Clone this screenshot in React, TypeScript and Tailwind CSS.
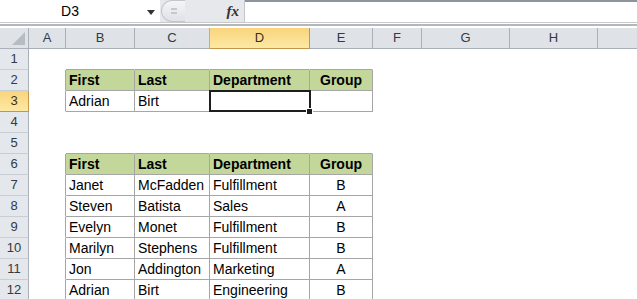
const COLS = [
    {key: "A", w: 37},
    {key: "B", w: 69},
    {key: "C", w: 75},
    {key: "D", w: 100},
    {key: "E", w: 63},
    {key: "F", w: 49},
    {key: "G", w: 88},
    {key: "H", w: 88},
    {key: "I", w: 88},
];

const HEADER = ["First", "Last", "Department", "Group"];

const DATA: Record<number, string[]> = {
    2: HEADER,
    3: ["Adrian", "Birt", "", ""],
    6: HEADER,
    7: ["Janet", "McFadden", "Fulfillment", "B"],
    8: ["Steven", "Batista", "Sales", "A"],
    9: ["Evelyn", "Monet", "Fulfillment", "B"],
    10: ["Marilyn", "Stephens", "Fulfillment", "B"],
    11: ["Jon", "Addington", "Marketing", "A"],
    12: ["Adrian", "Birt", "Engineering", "B"],
};

const ROWS = [1, 2, 3, 4, 5, 6, 7, 8, 9, 10, 11, 12];
const TABLE_COLS = ["B", "C", "D", "E"];

const inTable = (r: number, c?: string) =>
    !!c && TABLE_COLS.includes(c) && ((r >= 2 && r <= 3) || (r >= 6 && r <= 12));

const isHeaderRow = (r: number) => r === 2 || r === 6;

const FormulaBar = () => (
    <div className="flex h-[23px] border-b border-[#c9c9c9]">
        <div className="relative flex w-[160px] items-center bg-white">
            <span className="w-[140px] text-center text-[14px] text-black">D3</span>
            <svg className="absolute left-[147px] top-[10px]" width="8" height="5" viewBox="0 0 8 5">
                <path d="M0 0 H8 L4 5 Z" fill="#333"/>
            </svg>
        </div>
        <div className="flex w-[85px] items-center bg-[#e6e8eb] border-r border-[#c3c6ca]">
            <div className="ml-[1px] flex h-[22px] w-[24px] items-center justify-center rounded-l-full border border-r-0 border-[#c4c7cc] bg-gradient-to-b from-[#f4f5f6] to-[#dfe2e6]">
                <div className="flex flex-col gap-[2px]">
                    <div className="h-[2px] w-[6px] bg-[#c5c8cc]"/>
                    <div className="h-[2px] w-[6px] bg-[#c5c8cc]"/>
                </div>
            </div>
            <div className="flex-1"/>
            <span className="mr-[5px] text-[15px] italic font-bold text-[#333]" style={{fontFamily: '"Liberation Serif", serif'}}>fx</span>
        </div>
        <div className="flex-1 border-t-2 border-[#8d949c] bg-white"/>
    </div>
);

const ColumnHeaders = () => (
    <div className="flex h-[21px]">
        <div className="relative w-[29px] shrink-0 border-r border-b border-[#a9b0b8] bg-[#dfe3e8]">
            <svg className="absolute right-[3px] bottom-[3px]" width="13" height="13" viewBox="0 0 13 13">
                <path d="M13 0 V13 H0 Z" fill="#b6bcc4"/>
            </svg>
        </div>
        {COLS.map((c) => {
            const sel = c.key === "D";
            return (
                <div
                    key={c.key}
                    style={{width: c.w}}
                    className={
                        "flex shrink-0 items-center justify-center border-r border-b text-[13px] " +
                        (sel
                            ? "bg-gradient-to-b from-[#f9d47c] to-[#fde9a4] border-[#c2974a] text-[#3a3020]"
                            : "bg-[#dfe3e8] border-[#a9b0b8] text-[#333a44]")
                    }
                >
                    {/* column I runs off the window, its letter is not visible */}
                    {c.key === "I" ? "" : c.key}
                </div>
            );
        })}
    </div>
);

const Cell = ({r, ci}: { r: number; ci: number }) => {
    const col = COLS[ci];
    const next = COLS[ci + 1]?.key;
    const tableIdx = TABLE_COLS.indexOf(col.key);
    const value = tableIdx >= 0 && DATA[r] ? DATA[r][tableIdx] : "";
    const here = inTable(r, col.key);
    const rightLine = here || inTable(r, next);
    const bottomLine = here || inTable(r + 1, col.key);
    const header = here && isHeaderRow(r);
    const centered = col.key === "E";
    const selected = r === 3 && col.key === "D";

    return (
        <div
            style={{width: col.w}}
            className={
                "relative flex shrink-0 items-end pb-[1px] border-r border-b text-[14px] text-black " +
                (rightLine ? "border-r-[#a6a6a6] " : "border-r-white ") +
                (bottomLine ? "border-b-[#a6a6a6] " : "border-b-white ") +
                (header ? "bg-[#c4d79b] font-bold " : "bg-white ") +
                (centered ? "justify-center" : "pl-[3px]")
            }
        >
            <span className="whitespace-nowrap leading-[18px]">{value}</span>
            {selected && (
                <>
                    <div className="absolute z-10 -left-[1px] -top-[1px] h-[22px] w-[102px] border-2 border-[#1e1e1e]"/>
                    <div className="absolute z-20 -right-[4px] -bottom-[4px] h-[7px] w-[7px] border border-white bg-[#1e1e1e]"/>
                </>
            )}
        </div>
    );
};

const Row = ({r}: { r: number }) => {
    const sel = r === 3;
    return (
        <div className="flex h-[21px]">
            <div
                className={
                    "flex w-[29px] shrink-0 items-center justify-center border-r border-b text-[13px] " +
                    (sel
                        ? "bg-gradient-to-b from-[#f9d47c] to-[#fde9a4] border-[#c2974a] text-[#3a3020]"
                        : "bg-[#e4e7eb] border-r-[#a9b0b8] border-b-[#c9ced4] text-[#333a44]")
                }
            >
                {r}
            </div>
            {COLS.map((c, ci) => (
                <Cell key={c.key} r={r} ci={ci}/>
            ))}
        </div>
    );
};

export default function App() {
    return (
        <div
            className="h-[299px] w-[637px] overflow-hidden bg-white"
            style={{fontFamily: '"Liberation Sans", Arial, sans-serif'}}
        >
            <FormulaBar/>
            <div className="h-[4px] bg-white">
                <div className="mt-[1px] h-[2px] bg-[#b3b6ba]"/>
            </div>
            <ColumnHeaders/>
            {ROWS.map((r) => (
                <Row key={r} r={r}/>
            ))}
        </div>
    );
}
